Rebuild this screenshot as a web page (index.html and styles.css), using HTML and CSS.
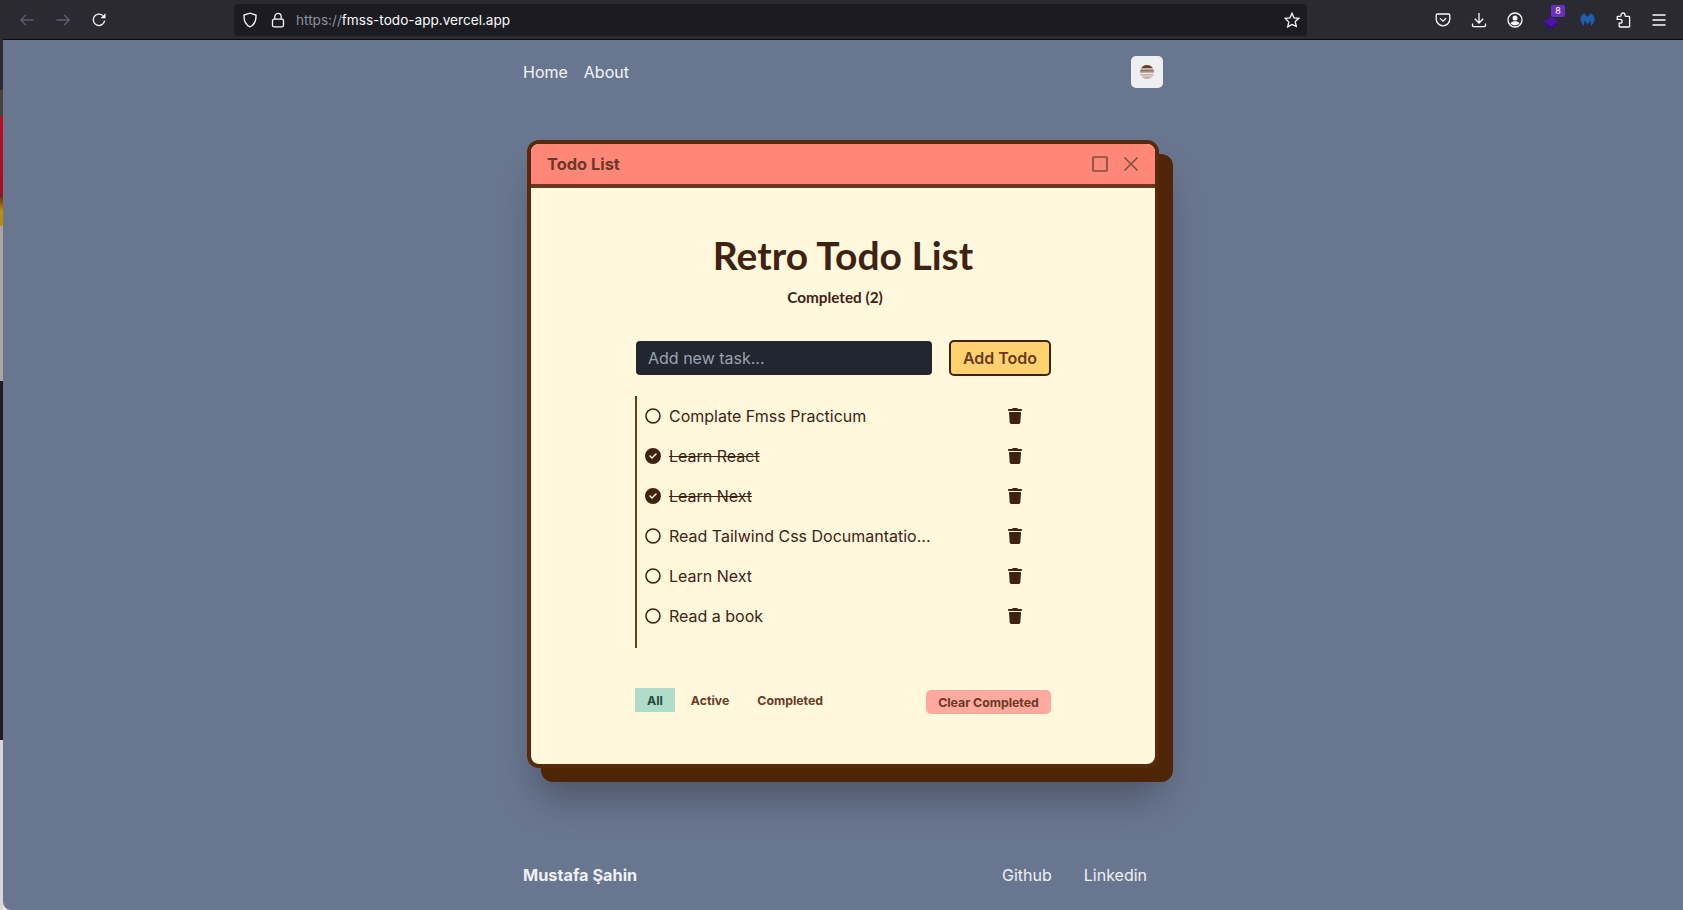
FILE: index.html

```html
<!DOCTYPE html>
<html>
<head>
    <meta charset="UTF-8">
    <title>Retro Todo List</title>
    <link rel="stylesheet" href="styles.css">
</head>
<body>
<svg class="defs" width="0" height="0">
    <symbol id="trash" viewBox="0 0 448 512">
        <path d="M135.2 17.7L128 32H32C14.3 32 0 46.3 0 64S14.3 96 32 96H416c17.7 0 32-14.3 32-32s-14.3-32-32-32H320l-7.2-14.3C307.4 6.8 296.3 0 284.2 0H163.8c-12.1 0-23.2 6.8-28.6 17.7zM416 128H32L53.2 467c1.6 25.3 22.6 45 47.9 45H346.9c25.3 0 46.3-19.7 47.9-45L416 128z"/>
    </symbol>
    <symbol id="check" viewBox="0 0 512 512">
        <path d="M256 512A256 256 0 1 0 256 0a256 256 0 1 0 0 512zM369 209L241 337c-9.4 9.4-24.6 9.4-33.9 0l-64-64c-9.4-9.4-9.4-24.6 0-33.9s24.6-9.4 33.9 0l47 47L335 175c9.4-9.4 24.6-9.4 33.9 0s9.4 24.6 0 33.9z"/>
    </symbol>
    <symbol id="circle" viewBox="0 0 16 16">
        <circle cx="8" cy="8" r="7" fill="none" stroke="currentColor" stroke-width="1.6"/>
    </symbol>
    <clipPath id="sun-clip"><circle cx="7" cy="7" r="7"/></clipPath>
</svg>

<div class="strip"></div>

<div class="browser">
    <header class="toolbar">
        <div class="tool dim"><svg viewBox="0 0 16 16"><path d="M14.5 8H1.8M7 2.8L1.8 8 7 13.2"/></svg></div>
        <div class="tool dim"><svg viewBox="0 0 16 16"><path d="M1.5 8h12.7M9 2.8L14.2 8 9 13.2"/></svg></div>
        <div class="tool"><svg viewBox="0 0 16 16"><path d="M13.6 8.6A5.7 5.7 0 1 1 11.8 3.6"/><path class="solid" d="M14.5 1.2v5h-5z"/></svg></div>

        <div class="urlbar">
            <span class="url-icon"><svg viewBox="0 0 16 16"><path d="M8 1.2l6 1.9c.2 5.4-1.5 9.7-6 11.7C3.5 12.8 1.8 8.5 2 3.1z"/></svg></span>
            <span class="url-icon"><svg viewBox="0 0 16 16"><rect x="2.5" y="7.2" width="11" height="7.6" rx="1.5"/><path d="M4.8 7V4.6a3.2 3.2 0 0 1 6.4 0V7"/></svg></span>
            <span class="url"><span class="scheme">https://</span>fmss-todo-app.vercel.app</span>
            <span class="star"><svg viewBox="0 0 16 16"><path d="M8 1.3l2 4.5 4.9.5-3.7 3.3 1.1 4.8L8 12.4l-4.3 2.5 1.1-4.8L1.1 6.3 6 5.8z"/></svg></span>
        </div>

        <div class="tools-right">
            <div class="tool"><svg viewBox="0 0 16 16"><path d="M2.5 2h11c.8 0 1.3.5 1.3 1.3V7a6.8 6.8 0 0 1-13.6 0V3.3C1.2 2.5 1.7 2 2.5 2z"/><path d="M5 6.3l3 2.9 3-2.9"/></svg></div>
            <div class="tool"><svg viewBox="0 0 16 16"><path d="M8 1v9.8M3.8 6.8L8 11l4.2-4.2M1.5 11.5v2c0 .7.4 1.100 1.100 1.100h10.800c.7 0 1.100-.4 1.100-1.100v-2"/></svg></div>
            <div class="tool"><svg viewBox="0 0 16 16"><circle cx="8" cy="8" r="7"/><circle class="solid" cx="8" cy="6" r="2.5"/><path class="solid" d="M3.5 11.200c1-1.400 2.600-2 4.500-2s3.500.6 4.500 2c-1 1.300-2.600 2.100-4.500 2.100s-3.500-.8-4.500-2.100z"/></svg></div>
            <div class="tool">
                <svg viewBox="0 0 16 16" class="stack"><path d="M1 10L8 5.500 15 10 8 15z" fill="#33108a"/><path d="M1 7.500L8 2.500l7 5-7 5z" fill="#4c14a5"/></svg>
                <span class="badge">8</span>
            </div>
            <div class="tool"><svg viewBox="0 0 16 16" class="malware"><path d="M8 5.300L4.700 1.500C2.300 2.300.5 4.700.5 7.500c0 3 1.500 5.200 3.700 7.300l.6-5.800 3.200 4.300 3.200-4.300.6 5.800c2.200-2.100 3.700-4.300 3.700-7.300 0-2.800-1.800-5.200-4.200-6z"/></svg></div>
            <div class="tool"><svg viewBox="0 0 16 16"><path d="M6 3.600V3a2 2 0 0 1 4 0v.6c0 .5.300.8.800.8h3c.5 0 .8.300.8.800v9c0 .5-.3.800-.8.800H5c-.5 0-.8-.3-.8-.8v-3.100h1a1.900 1.900 0 0 0 0-3.800h-3V5.200c0-.5.300-.8.800-.8h2.200c.5 0 .8-.3.800-.8z"/></svg></div>
            <div class="tool"><svg viewBox="0 0 16 16"><path d="M1.5 3h13M1.5 8h13M1.5 13h13"/></svg></div>
        </div>
    </header>

    <div class="page">
        <nav class="nav">
            <div class="nav-links">
                <a>Home</a>
                <a>About</a>
            </div>
            <button class="theme-btn">
                <svg class="sun" width="14" height="14" viewBox="0 0 14 14">
                    <g clip-path="url(#sun-clip)">
                        <rect width="14" height="14" fill="#c4aca2"/>
                        <rect width="14" height="3" fill="#6f3d22"/>
                        <rect y="5" width="14" height="1.5" fill="#8f6f62"/>
                        <rect y="8" width="14" height="1" fill="#f1eaea"/>
                        <rect y="10.5" width="14" height="1" fill="#e8dedc"/>
                    </g>
                </svg>
            </button>
        </nav>

        <section class="window">
            <div class="titlebar">
                <span class="titlebar-text">Todo List</span>
                <div class="window-btns">
                    <svg width="16" height="16" viewBox="0 0 16 16"><rect x="1" y="1" width="14" height="14" rx="1"/></svg>
                    <svg width="16" height="16" viewBox="0 0 16 16"><path d="M1.5 1.5l13 13M14.5 1.5l-13 13"/></svg>
                </div>
            </div>

            <div class="window-body">
                <h1>Retro Todo List</h1>
                <p class="count">Completed (2)</p>

                <form class="add-form">
                    <input type="text" placeholder="Add new task...">
                    <button type="button" class="add-btn">Add Todo</button>
                </form>

                <ul class="todos">
                    <li class="todo">
                        <svg class="state"><use href="#circle"/></svg>
                        <span class="todo-text">Complate Fmss Practicum</span>
                        <svg class="trash"><use href="#trash"/></svg>
                    </li>
                    <li class="todo done">
                        <svg class="state"><use href="#check"/></svg>
                        <span class="todo-text">Learn React</span>
                        <svg class="trash"><use href="#trash"/></svg>
                    </li>
                    <li class="todo done">
                        <svg class="state"><use href="#check"/></svg>
                        <span class="todo-text">Learn Next</span>
                        <svg class="trash"><use href="#trash"/></svg>
                    </li>
                    <li class="todo">
                        <svg class="state"><use href="#circle"/></svg>
                        <span class="todo-text">Read Tailwind Css Documantatio...</span>
                        <svg class="trash"><use href="#trash"/></svg>
                    </li>
                    <li class="todo">
                        <svg class="state"><use href="#circle"/></svg>
                        <span class="todo-text">Learn Next</span>
                        <svg class="trash"><use href="#trash"/></svg>
                    </li>
                    <li class="todo">
                        <svg class="state"><use href="#circle"/></svg>
                        <span class="todo-text">Read a book</span>
                        <svg class="trash"><use href="#trash"/></svg>
                    </li>
                </ul>

                <div class="filters">
                    <div class="filter-group">
                        <button class="filter active">All</button>
                        <button class="filter">Active</button>
                        <button class="filter">Completed</button>
                    </div>
                    <button class="clear-btn">Clear Completed</button>
                </div>
            </div>
        </section>

        <footer class="footer">
            <strong class="author">Mustafa Şahin</strong>
            <div class="footer-links">
                <a>Github</a>
                <a>Linkedin</a>
            </div>
        </footer>
    </div>
</div>
</body>
</html>
```

FILE: styles.css

```css
* {
    box-sizing: border-box;
}
html, body {
    height: 100%;
}
body {
    margin: 0;
    display: flex;
    overflow: hidden;
    font-family: Inter, "Liberation Sans", sans-serif;
    background-color: #e8e8e8;
}
.defs {
    position: absolute;
}

/* bit of the desktop left of the browser window */
.strip {
    width: 3px;
    flex: none;
    background: linear-gradient(to bottom,
        #2b2a33 0, #2b2a33 90px,
        #45433a 90px, #45433a 116px,
        #b5101f 116px, #a80f1c 195px,
        #6d1c14 195px, #b88c0c 210px, #b88c0c 226px,
        #a9a5a1 226px, #a9a5a1 381px,
        #1f1b21 381px, #1f1b21 740px,
        #d8d8d8 740px, #d8d8d8 100%);
}
.browser {
    flex: 1;
    display: flex;
    flex-direction: column;
    min-width: 0;
}

/* browser toolbar */
.toolbar {
    height: 40px;
    flex: none;
    display: flex;
    align-items: center;
    padding: 0 6px;
    background-color: #2b2a33;
    border-bottom: 1px solid #0c0c0f;
}
.tool {
    width: 36px;
    height: 32px;
    position: relative;
    display: flex;
    align-items: center;
    justify-content: center;
}
.tool svg, .url-icon svg, .star svg {
    width: 16px;
    height: 16px;
    fill: none;
    stroke: #fbfbfe;
    stroke-width: 1.3;
}
.tool.dim svg {
    stroke: #5f5e69;
}
.tool svg .solid {
    fill: #fbfbfe;
    stroke: none;
}
.tool svg.stack {
    stroke: none;
    margin-top: 4px;
}
.tool svg.malware {
    fill: #1d5fae;
    stroke: none;
    width: 15px;
    height: 15px;
}
.badge {
    position: absolute;
    top: 1px;
    right: 4px;
    width: 14px;
    height: 12px;
    border-radius: 2px;
    background-color: #6a2fc0;
    color: #fff;
    font-size: 9px;
    line-height: 12px;
    text-align: center;
}
.urlbar {
    width: 1073px;
    height: 32px;
    margin-left: 117px;
    padding: 0 1px 0 8px;
    display: flex;
    align-items: center;
    border-radius: 4px;
    background-color: #1c1b22;
}
.url-icon {
    width: 28px;
    height: 16px;
    display: flex;
}
.url {
    flex: 1;
    margin-left: -2px;
    font-size: 13.6px;
    color: #fbfbfe;
}
.scheme {
    color: #8f8f9d;
}
.star {
    width: 28px;
    height: 16px;
    display: flex;
    justify-content: center;
}
.tools-right {
    margin-left: auto;
    display: flex;
}

/* page */
.page {
    flex: 1;
    background-color: #69768f;
    border-bottom-left-radius: 8px;
}
.nav {
    width: 640px;
    margin: 0 auto;
    padding-top: 16px;
    display: flex;
    justify-content: space-between;
    align-items: center;
    color: #f1f5f9;
}
.nav-links {
    display: flex;
    gap: 16px;
    font-size: 16px;
}
.theme-btn {
    width: 32px;
    height: 32px;
    padding: 0;
    border: none;
    border-radius: 5px;
    background-color: #eeeff3;
    display: flex;
    align-items: center;
    justify-content: center;
}

/* todo window */
.window {
    width: 632px;
    height: 628px;
    margin: 52px auto 0;
    border: 4px solid #58290a;
    border-radius: 12px;
    background-color: #fff8dd;
    box-shadow: 14px 14px 0 0 #4f2508, 7px 32px 42px -6px rgba(0, 0, 0, 0.32);
}
.titlebar {
    height: 44px;
    padding: 0 16px;
    display: flex;
    align-items: center;
    justify-content: space-between;
    border-radius: 8px 8px 0 0;
    background-color: #ff8779;
    border-bottom: 4px solid #6a3a1f;
}
.titlebar-text {
    font-size: 16.4px;
    font-weight: 700;
    color: #6b3a23;
}
.window-btns {
    display: flex;
    gap: 15px;
}
.window-btns svg {
    fill: none;
    stroke: #84503a;
    stroke-width: 1.7;
}
.window-body {
    padding-top: 47px;
    display: flex;
    flex-direction: column;
    align-items: center;
    color: #3f2212;
}
h1 {
    margin: 0;
    font-family: Lato, Inter, sans-serif;
    font-size: 39px;
    line-height: 40px;
    font-weight: 700;
}
.count {
    margin: 12px 16px 0 0;
    font-family: Lato, Inter, sans-serif;
    font-size: 15.3px;
    line-height: 20px;
    font-weight: 700;
}
.add-form {
    width: 416px;
    margin-top: 33px;
    padding-left: 1px;
    display: flex;
    justify-content: space-between;
    align-items: center;
}
.add-form input {
    width: 296px;
    height: 34px;
    padding: 0 12px;
    border: none;
    border-radius: 4px;
    background-color: #222630;
    font-family: inherit;
    font-size: 16px;
    color: #fff;
}
.add-form input::placeholder {
    color: #9ca3af;
}
.add-btn {
    width: 102px;
    height: 36px;
    padding: 0;
    border: 2px solid #3f2212;
    border-radius: 5px;
    background-color: #ffd26f;
    font-family: inherit;
    font-size: 16px;
    font-weight: 600;
    color: #6a3a1f;
}
.todos {
    width: 416px;
    height: 252px;
    margin: 20px 0 0;
    padding: 0;
    list-style: none;
    border-left: 2px solid #6a3a1f;
}
.todo {
    height: 40px;
    padding: 0 29px 0 8px;
    display: flex;
    align-items: center;
    gap: 8px;
    font-size: 16px;
}
.todo-text {
    flex: 1;
}
.done .todo-text {
    text-decoration: line-through;
}
.state {
    width: 16px;
    height: 16px;
    fill: #3f2212;
    color: #3f2212;
}
.trash {
    width: 14px;
    height: 16px;
    fill: #3f2212;
}
.filters {
    width: 416px;
    margin-top: 40px;
    display: flex;
    justify-content: space-between;
    align-items: flex-start;
}
.filter-group {
    display: flex;
    gap: 4px;
}
.filter {
    height: 24px;
    padding: 0 12px;
    border: none;
    background: none;
    font-family: inherit;
    font-size: 12.3px;
    font-weight: 700;
    color: #6b3a23;
}
.filter.active {
    background-color: #aedcc8;
    color: #234a3c;
}
.clear-btn {
    height: 24px;
    width: 125px;
    margin-top: 2px;
    padding: 0;
    border: none;
    border-radius: 5px;
    background-color: #ffa9a0;
    font-family: inherit;
    font-size: 12.3px;
    font-weight: 700;
    color: #6b3a23;
}

/* footer */
.footer {
    width: 640px;
    margin: 95px auto 0;
    padding-right: 16px;
    display: flex;
    justify-content: space-between;
    font-size: 16px;
    line-height: 24px;
    color: #eef1f6;
}
.author {
    font-size: 16.3px;
}
.footer-links {
    display: flex;
    gap: 32px;
}
```
